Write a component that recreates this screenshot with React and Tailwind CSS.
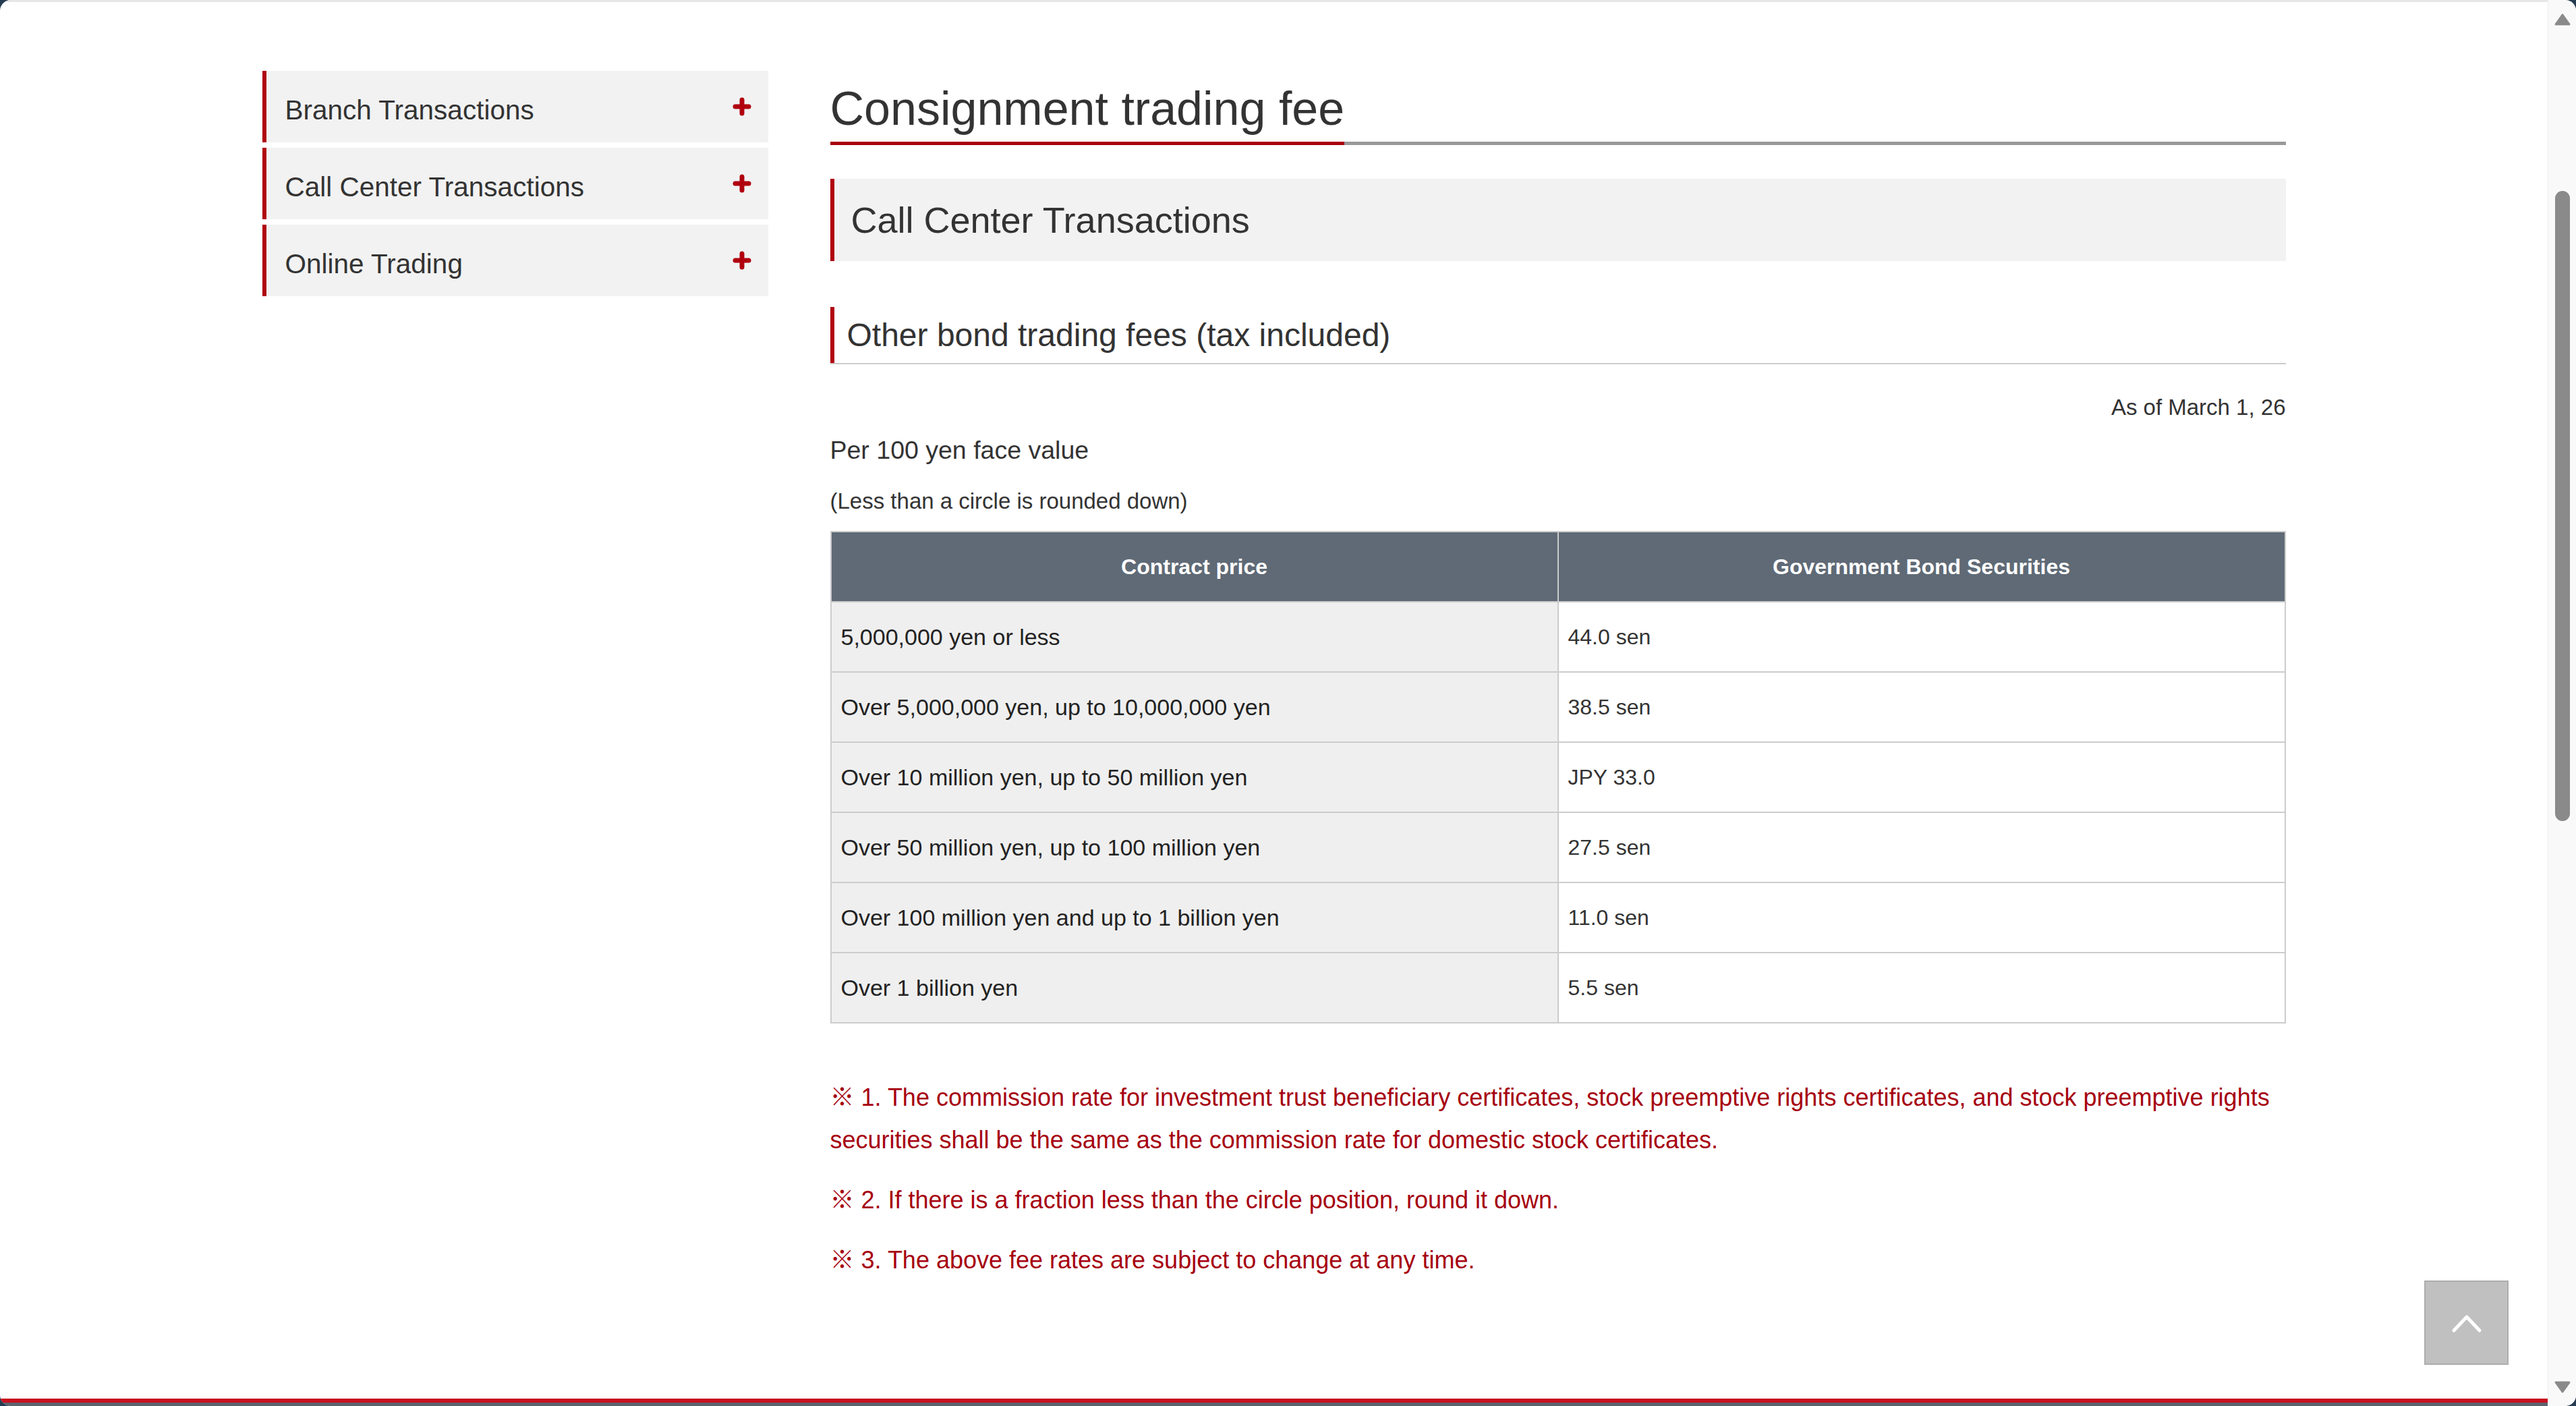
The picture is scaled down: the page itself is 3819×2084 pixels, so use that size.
const MENU = ['Branch Transactions', 'Call Center Transactions', 'Online Trading'];

const ROWS = [
  ['5,000,000 yen or less', '44.0 sen'],
  ['Over 5,000,000 yen, up to 10,000,000 yen', '38.5 sen'],
  ['Over 10 million yen, up to 50 million yen', 'JPY 33.0'],
  ['Over 50 million yen, up to 100 million yen', '27.5 sen'],
  ['Over 100 million yen and up to 1 billion yen', '11.0 sen'],
  ['Over 1 billion yen', '5.5 sen'],
];

const NOTES = [
  '※ 1. The commission rate for investment trust beneficiary certificates, stock preemptive rights certificates, and stock preemptive rights securities shall be the same as the commission rate for domestic stock certificates.',
  '※ 2. If there is a fraction less than the circle position, round it down.',
  '※ 3. The above fee rates are subject to change at any time.',
];

const PlusIcon = () => (
  <svg width="28" height="28" viewBox="0 0 28 28" fill="none">
    <path d="M14 4V24M4 14H24" stroke="#b0000f" strokeWidth="7" strokeLinecap="round" />
  </svg>
);

const SideMenu = () => (
  <div className="w-[750px] shrink-0 flex flex-col gap-[8px]">
    {MENU.map(item => (
      <div
        key={item}
        className="h-[106px] flex items-center justify-between bg-[#f2f2f2] border-l-[6px] border-[#b0000f] pl-[28px] pr-[25px]"
      >
        <span className="mt-[10px] text-[40.5px] text-[#333]">{item}</span>
        <PlusIcon />
      </div>
    ))}
  </div>
);

const FeeTable = () => (
  <table className="w-full mt-[20px] border-collapse border-2 border-[#cccccc] table-fixed">
    <thead>
      <tr>
        <th className="h-[104px] w-1/2 bg-[#5f6a76] border-2 border-[#cccccc] text-white text-[32px] font-bold">Contract price</th>
        <th className="h-[104px] w-1/2 bg-[#5f6a76] border-2 border-[#cccccc] text-white text-[32px] font-bold">Government Bond Securities</th>
      </tr>
    </thead>
    <tbody>
      {ROWS.map(([price, fee]) => (
        <tr key={price}>
          <td className="h-[104px] bg-[#efefef] border-2 border-[#cccccc] pl-[14px] text-[34px] text-[#222]">{price}</td>
          <td className="h-[104px] bg-white border-2 border-[#cccccc] pl-[14px] text-[32px] text-[#333]">{fee}</td>
        </tr>
      ))}
    </tbody>
  </table>
);

const MainContent = () => (
  <div className="w-[2158px] shrink-0 text-[#333]">
    {/* page title with red/grey underline */}
    <div className="mt-[14px] border-b-[5px] border-[#999999]">
      <h1 className="inline-block text-[70px] leading-[84px] pb-[7px] -mb-[5px] border-b-[5px] border-[#a8000c]">
        Consignment trading fee
      </h1>
    </div>

    <div className="mt-[50px] h-[122px] flex items-center bg-[#f2f2f2] border-l-[6px] border-[#b0000f] pl-[25px]">
      <h2 className="text-[54px]">Call Center Transactions</h2>
    </div>

    <div className="mt-[68px] border-b-2 border-[#cccccc]">
      <div className="h-[83px] flex items-center border-l-[6px] border-[#b0000f] pl-[19px]">
        <h3 className="text-[48px]">Other bond trading fees (tax included)</h3>
      </div>
    </div>

    <p className="mt-[39px] text-right text-[33px] leading-[50px]">As of March 1, 26</p>
    <p className="mt-[11px] text-[37.5px] leading-[54px]">Per 100 yen face value</p>
    <p className="mt-[25px] text-[33px] leading-[48px]">(Less than a circle is rounded down)</p>

    <FeeTable />

    <div className="mt-[78px] text-[#a6000f] text-[36px] leading-[63px]">
      {NOTES.map((note, i) => (
        <p key={i} className={i ? 'mt-[26px]' : ''}>{note}</p>
      ))}
    </div>
  </div>
);

const ScrollBar = () => (
  <div className="w-[42px] shrink-0 flex flex-col items-center bg-[#f9f9f9] border-l border-[#eeeeee] pt-[20px] pb-[19px]">
    <svg width="24" height="18" viewBox="0 0 24 18">
      <path d="M12 2L22 16H2Z" fill="#8a8a8a" stroke="#8a8a8a" strokeWidth="3" strokeLinejoin="round" />
    </svg>
    <div className="mt-[245px] w-[22px] h-[934px] rounded-full bg-[#8a8a8a]" />
    <div className="flex-1" />
    <svg width="24" height="18" viewBox="0 0 24 18">
      <path d="M2 2H22L12 16Z" fill="#8a8a8a" stroke="#8a8a8a" strokeWidth="3" strokeLinejoin="round" />
    </svg>
  </div>
);

export default function App() {
  return (
    <div className="h-screen w-full bg-[#263c52] font-['Liberation_Sans','Noto_Sans_CJK_JP',sans-serif]">
      <div className="h-full flex rounded-[16px] overflow-hidden bg-white">
        <div className="relative flex-1 flex flex-col border-t-[3px] border-[#e6e6e6]">
          <div className="flex-1">
            <div className="w-[3000px] mx-auto pt-[102px] flex items-start gap-[92px]">
              <SideMenu />
              <MainContent />
            </div>
          </div>

          <div className="h-[6px] bg-[#c8101e]" />
          <div className="h-[5px] bg-[#5c6470]" />

          {/* back to top */}
          <button className="absolute right-[58px] bottom-[61px] w-[125px] h-[125px] flex items-center justify-center bg-[#c0c0c0] border-2 border-[#adadad]">
            <svg width="46" height="30" viewBox="0 0 46 30" fill="none">
              <path d="M4 26L23 6L42 26" stroke="white" strokeWidth="5" strokeLinecap="round" strokeLinejoin="round" />
            </svg>
          </button>
        </div>
        <ScrollBar />
      </div>
    </div>
  );
}
